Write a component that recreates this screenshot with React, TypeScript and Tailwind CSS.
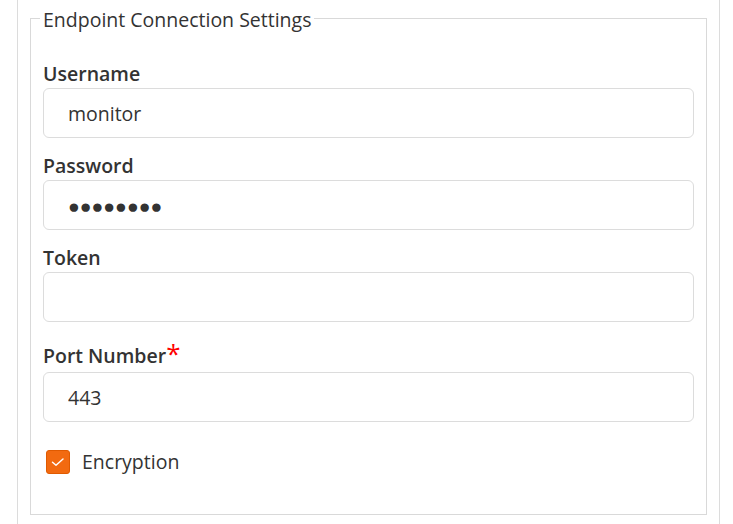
import React from "react";

const FONT = "'Open Sans', 'Noto Sans', sans-serif";

function Field({ label, value, required }: { label: string; value: string; required?: boolean }) {
  return (
    <div className={required ? "mt-[13px] flex flex-col" : "mt-[14px] flex flex-col"}>
      <label className="mb-[1px] text-[19.5px] font-semibold leading-[27px] text-[#333]">
        {label}
        {required && <span className="text-[26px] font-normal leading-[normal] text-[#ff0000]">*</span>}
      </label>
      <input
        readOnly
        value={value}
        className="h-[50px] w-full rounded-[6px] border border-[#dcdcdc] bg-white pl-[24px] text-[19.5px] text-[#333] outline-none"
        style={{ fontFamily: FONT }}
      />
    </div>
  );
}

export default function App() {
  return (
    <div className="h-[524px] w-[733px] overflow-hidden bg-white pl-[17px] pr-[13px]" style={{ fontFamily: FONT }}>
      <div className="h-full border-x border-[#dcdcdc] px-[12px] pt-[4px]">
        <fieldset className="border border-[#d9d9d9] px-[12px] pb-[39px] pt-[13px]">
          <legend className="-ml-[3px] px-[3px] pt-[2px] text-[19.5px] leading-[27px] text-[#333]">
            Endpoint Connection Settings
          </legend>
          <Field label="Username" value="monitor" />
          <Field label="Password" value="●●●●●●●●" />
          <Field label="Token" value="" />
          <Field label="Port Number" value="443" required />
          <div className="mt-[26px] flex items-center">
            <span className="ml-[3px] flex h-[24px] w-[24px] items-center justify-center rounded-[3px] border border-[#e05a00] bg-[#f26a10]">
              <svg width="14" height="14" viewBox="0 0 14 14" fill="none">
                <path d="M1.5 7.2 L5 10.2 L12 4" stroke="white" strokeWidth="1.5" strokeLinecap="round" strokeLinejoin="round" />
              </svg>
            </span>
            <span className="ml-[12px] text-[19.5px] leading-[27px] text-[#333]">Encryption</span>
          </div>
        </fieldset>
      </div>
    </div>
  );
}
